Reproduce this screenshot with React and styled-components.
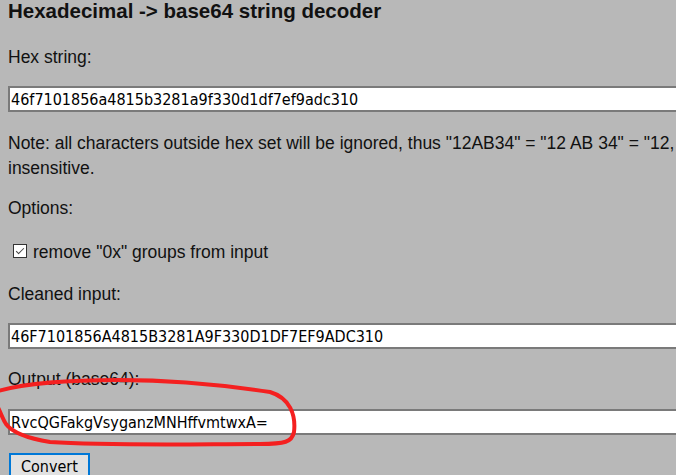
import React from "react";
import styled, { createGlobalStyle } from "styled-components";

const Global = createGlobalStyle`
  html, body { margin: 0; padding: 0; background: #b8b8b8; overflow: hidden; }
  body { width: 676px; height: 475px; }
`;

const Page = styled.div`
  position: relative;
  width: 676px;
  height: 475px;
  padding: 0 8px;
  box-sizing: border-box;
  display: flex;
  flex-direction: column;
  align-items: flex-start;
  font-family: "Liberation Sans", Arial, sans-serif;
  color: #111;
`;

const Title = styled.h3`
  margin: 0;
  font-size: 20.5px;
  line-height: 22px;
  font-weight: bold;
  white-space: nowrap;
`;

const Label = styled.div`
  margin-top: ${(p) => p.$mt}px;
  flex: none;
  font-size: 17.5px;
  line-height: ${(p) => p.$lh || 22}px;
  white-space: nowrap;
`;

const Field = styled.input`
  margin-top: ${(p) => p.$mt}px;
  flex: none;
  width: 720px;
  height: 26px;
  box-sizing: border-box;
  border: 2px solid #7a7a7a;
  background: #fff;
  padding: 0 1px;
  font-family: "DejaVu Sans Condensed", "DejaVu Sans", sans-serif;
  font-size: 16px;
  color: #000;
  outline: none;
`;

const CheckRow = styled.label`
  margin-top: ${(p) => p.$mt}px;
  display: flex;
  align-items: center;
  font-size: 17.5px;
  line-height: 22px;
  white-space: nowrap;
`;

const Check = styled.input`
  appearance: none;
  margin: 0 6px 0 5px;
  width: 14px;
  height: 14px;
  box-sizing: border-box;
  border: 1px solid #333;
  background: #fff;
  position: relative;
  top: -1px;
  &::after {
    content: "";
    position: absolute;
    left: 4px;
    top: 1px;
    width: 3px;
    height: 7px;
    border-right: 1.5px solid #444;
    border-bottom: 1.5px solid #444;
    transform: rotate(45deg);
  }
`;

const Button = styled.button`
  margin-top: ${(p) => p.$mt}px;
  flex: none;
  height: 26px;
  padding: 0 10px;
  border: 2px solid #0078d7;
  background: #e1e1e1;
  font-family: "DejaVu Sans Condensed", "DejaVu Sans", sans-serif;
  font-size: 16px;
  color: #000;
  margin-left: 1px;
`;

const Mark = styled.svg`
  position: absolute;
  left: 0;
  top: 0;
  pointer-events: none;
`;

export default function App() {
  return (
    <>
      <Global />
      <Page>
        <Title>Hexadecimal -&gt; base64 string decoder</Title>
        <Label $mt={24}>Hex string:</Label>
        <Field $mt={18} readOnly value="46f7101856a4815b3281a9f330d1df7ef9adc310" />
        <Label $mt={19} $lh={25}>
          Note: all characters outside hex set will be ignored, thus "12AB34" = "12 AB 34" = "12, AB, 34" and so on. Also, it is case
          <br />
          insensitive.
        </Label>
        <Label $mt={16}>Options:</Label>
        <CheckRow $mt={22}>
          <Check type="checkbox" defaultChecked />
          remove "0x" groups from input
        </CheckRow>
        <Label $mt={20}>Cleaned input:</Label>
        <Field $mt={18} readOnly value="46F7101856A4815B3281A9F330D1DF7EF9ADC310" />
        <Label $mt={19}>Output (base64):</Label>
        <Field $mt={19} readOnly value="RvcQGFakgVsyganzMNHffvmtwxA=" />
        <Button $mt={18}>Convert</Button>
        <Mark width="676" height="475" viewBox="0 0 676 475">
          <path
            d="M -5 392 C 20 384, 60 380, 120 380 C 180 380, 230 386, 270 392 C 290 398, 296 415, 294 432 C 292 442, 285 444, 260 444 C 200 444, 110 446, 50 442 C 25 438, 12 432, 6 424 C 2 418, 0 410, -4 404"
            fill="none"
            stroke="#f42020"
            strokeWidth="4"
            strokeLinecap="round"
          />
        </Mark>
      </Page>
    </>
  );
}
